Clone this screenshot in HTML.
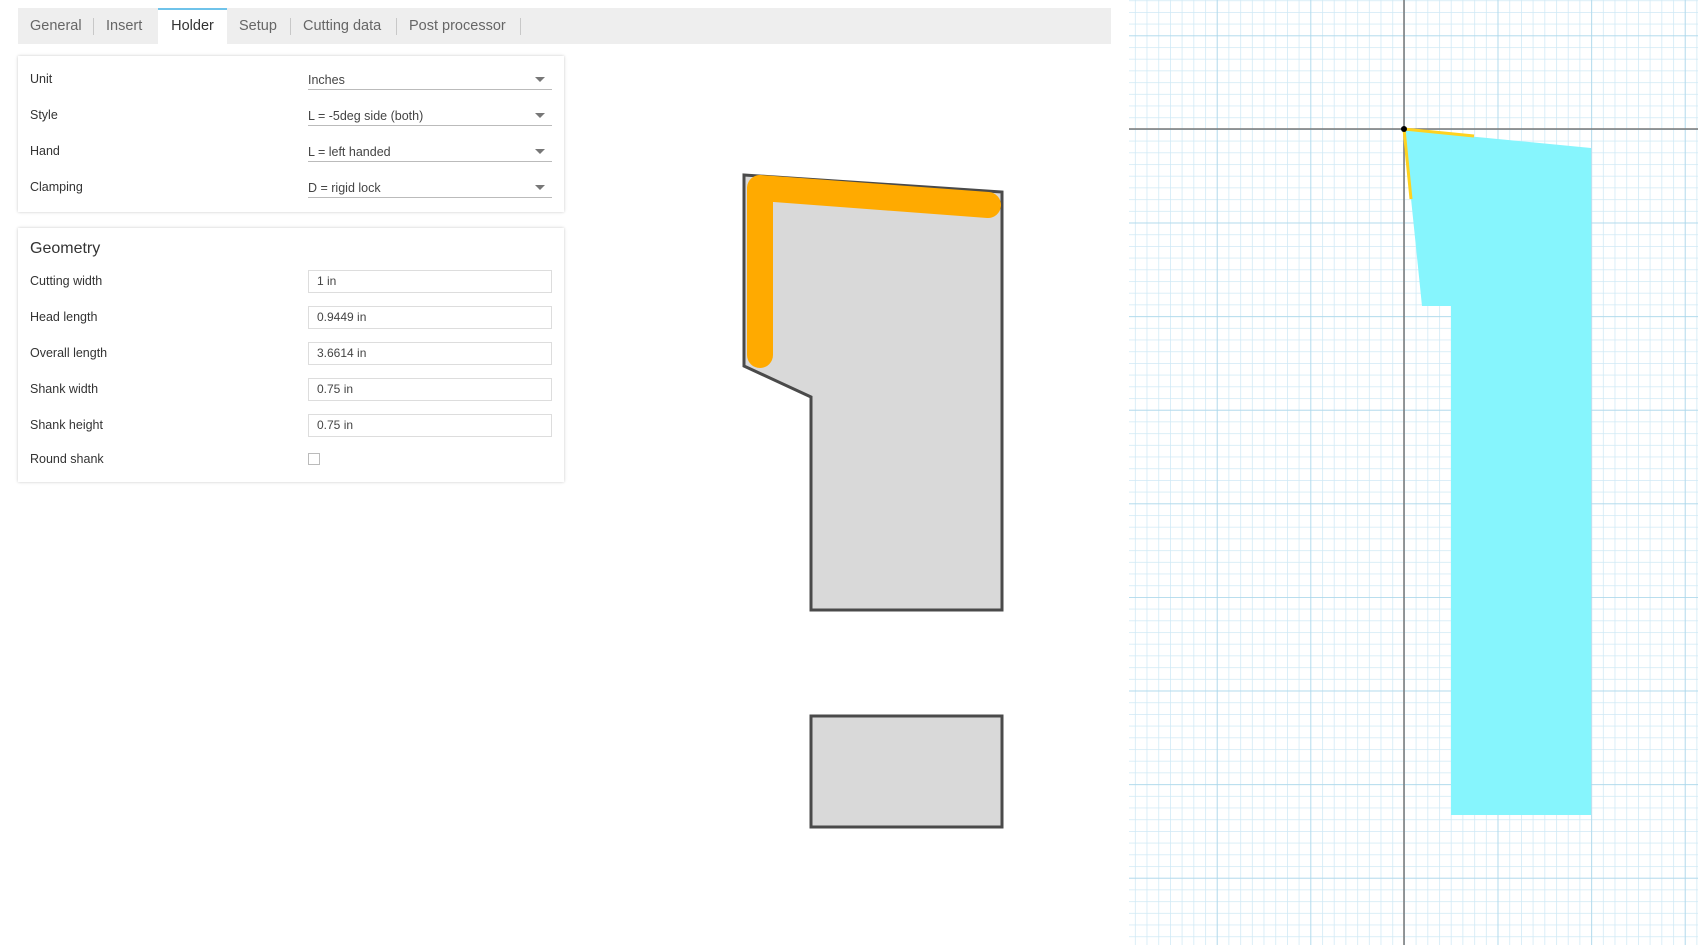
<!DOCTYPE html>
<html><head><meta charset="utf-8"><style>
*{margin:0;padding:0;box-sizing:border-box}
body{width:1698px;height:945px;background:#fff;font-family:"Liberation Sans",sans-serif;position:relative;overflow:hidden;color:#3c3c3c}
.tabs{position:absolute;left:18px;top:8px;width:1093px;height:36px;background:#eee}
.tab{position:absolute;top:0;height:36px;line-height:36px;font-size:14.5px;color:#666}
.sep{position:absolute;top:10px;width:1px;height:17px;background:#c8c8c8}
.tab.act{background:#fff;border-top:2px solid #6fc3ea;color:#333;text-align:center;line-height:33px}
.card{position:absolute;left:18px;width:546px;background:#fff;box-shadow:0 0 3px rgba(0,0,0,.22)}
.lbl{position:absolute;left:12px;font-size:12.5px;color:#333}
.sel{position:absolute;left:290px;width:244px;height:20px;border-bottom:1px solid #bbb;font-size:12.5px;color:#444;padding-top:3px}
.sel:after{content:"";position:absolute;right:7px;top:7px;border-left:5px solid transparent;border-right:5px solid transparent;border-top:5px solid #777}
.inp{position:absolute;left:290px;width:244px;height:23px;border:1px solid #ddd;font-size:12px;color:#444;padding-left:8px;line-height:21px}
</style></head><body>
<div class="tabs">
<div class="tab" style="left:12px">General</div><div class="sep" style="left:75px"></div>
<div class="tab" style="left:88px">Insert</div>
<div class="tab act" style="left:140px;width:69px">Holder</div>
<div class="tab" style="left:221px">Setup</div><div class="sep" style="left:272px"></div>
<div class="tab" style="left:285px">Cutting data</div><div class="sep" style="left:378px"></div>
<div class="tab" style="left:391px">Post processor</div><div class="sep" style="left:502px"></div>
</div>
<div class="card" style="top:56px;height:156px">
<div class="lbl" style="top:16px">Unit</div><div class="sel" style="top:14px">Inches</div>
<div class="lbl" style="top:52px">Style</div><div class="sel" style="top:50px">L = -5deg side (both)</div>
<div class="lbl" style="top:88px">Hand</div><div class="sel" style="top:86px">L = left handed</div>
<div class="lbl" style="top:124px">Clamping</div><div class="sel" style="top:122px">D = rigid lock</div>
</div>
<div class="card" style="top:228px;height:254px">
<div style="position:absolute;left:12px;top:12px;font-size:16px;color:#333">Geometry</div>
<div class="lbl" style="top:46px">Cutting width</div><div class="inp" style="top:42px">1 in</div>
<div class="lbl" style="top:82px">Head length</div><div class="inp" style="top:78px">0.9449 in</div>
<div class="lbl" style="top:118px">Overall length</div><div class="inp" style="top:114px">3.6614 in</div>
<div class="lbl" style="top:154px">Shank width</div><div class="inp" style="top:150px">0.75 in</div>
<div class="lbl" style="top:190px">Shank height</div><div class="inp" style="top:186px">0.75 in</div>
<div class="lbl" style="top:224px">Round shank</div><div style="position:absolute;left:290px;top:225px;width:12px;height:12px;border:1px solid #bbb"></div>
</div>
<svg width="1698" height="945" style="position:absolute;left:0;top:0">
<polygon points="744,175 1002,192 1002,610 811,610 811,397 744,366" fill="#d9d9d9" stroke="#4a4a4a" stroke-width="3"/>
<polyline points="988,205 760,188 760,355" fill="none" stroke="#ffaa00" stroke-width="26" stroke-linecap="round" stroke-linejoin="round"/>
<rect x="811" y="716" width="191" height="111" fill="#d9d9d9" stroke="#4a4a4a" stroke-width="3"/>
<defs>
<pattern id="mn" x="1404" y="129" width="11.7" height="11.7" patternUnits="userSpaceOnUse"><path d="M0 0V11.7M0 0H11.7" stroke="#cfe9f5" stroke-width="1.5" fill="none"/></pattern>
<pattern id="mj" x="1404" y="129" width="93.6" height="93.6" patternUnits="userSpaceOnUse"><path d="M0 0V93.6M0 0H93.6" stroke="#a9d6ea" stroke-width="1.5" fill="none"/></pattern>
</defs>
<rect x="1129" y="0" width="569" height="945" fill="url(#mn)"/>
<rect x="1129" y="0" width="569" height="945" fill="url(#mj)"/>
<line x1="1404" y1="0" x2="1404" y2="945" stroke="#777" stroke-width="1.5"/>
<line x1="1129" y1="129" x2="1698" y2="129" stroke="#777" stroke-width="1.5"/>
<polygon points="1404,130 1591,148 1591,815 1451,815 1451,306 1422,306" fill="#86f5fd"/>
<polyline points="1474,136 1404,129 1411,199" fill="none" stroke="#ffd21f" stroke-width="3"/>
<circle cx="1404" cy="129" r="3" fill="#000"/>
</svg>
</body></html>
